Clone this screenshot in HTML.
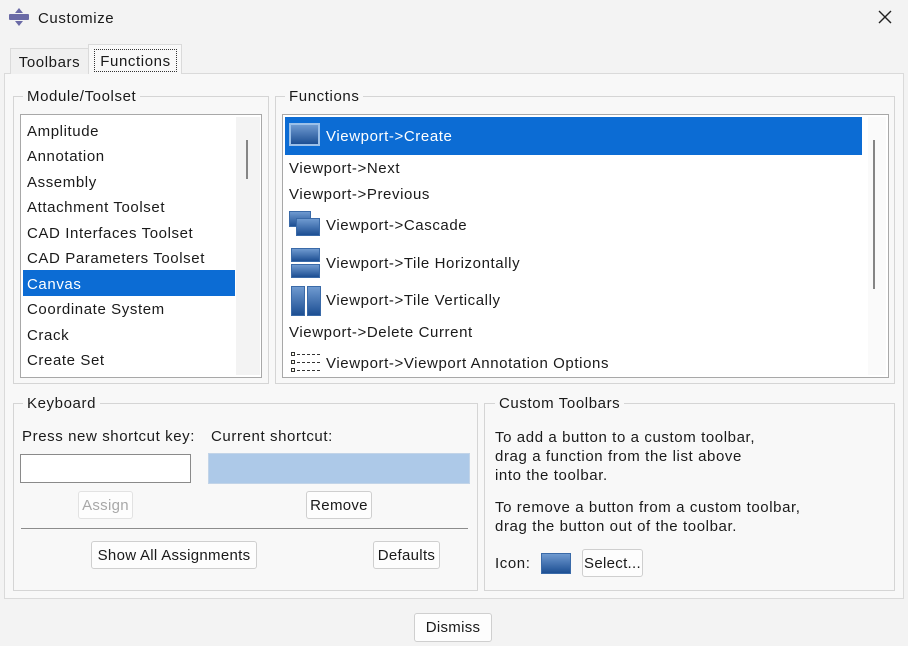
<!DOCTYPE html>
<html><head><style>
*{box-sizing:border-box;margin:0;padding:0}
body{width:908px;height:646px;background:#f3f3f3;font-family:"Liberation Sans",sans-serif;font-size:15px;letter-spacing:0.6px;color:#1a1a1a;position:relative;overflow:hidden}
.a{position:absolute;white-space:nowrap}
.grp{position:absolute;border:1px solid #d5d5d5}
.gl{position:absolute;background:#f8f8f8;padding:0 4px;line-height:16px}
.btn{position:absolute;background:#fdfdfd;border:1px solid #cfcfcf;border-radius:3px;text-align:center;line-height:27px;letter-spacing:0.3px}
.li{position:absolute;left:6px;line-height:18px}
.ic{position:absolute;background:linear-gradient(#6f9ad0,#1d4f93);border:1px solid #3a6aa8}
</style></head><body>
<svg class="a" style="left:9px;top:8px" width="20" height="18" viewBox="0 0 20 18"><path d="M10 0 L14 5 H6 Z" fill="#6a6aa6"/><rect x="0" y="6" width="20" height="6" rx="1" fill="#6a6aa6"/><path d="M10 18 L14 13 H6 Z" fill="#6a6aa6"/></svg>
<div class="a" style="left:38px;top:10px;font-size:15px">Customize</div>
<svg class="a" style="left:878px;top:10px" width="14" height="14"><path d="M1 1 L13 13 M13 1 L1 13" stroke="#222" stroke-width="1.4"/></svg>

<div class="a" style="left:4px;top:73px;width:900px;height:526px;background:#f8f8f8;border:1px solid #dadada"></div>
<div class="a" style="left:10px;top:48px;width:79px;height:26px;background:#f0f0f0;border:1px solid #dadada;border-bottom:none;text-align:center;line-height:28px">Toolbars</div>
<div class="a" style="left:88px;top:44px;width:94px;height:30px;background:#f8f8f8;border:1px solid #dadada;border-bottom:none"></div>
<div class="a" style="left:94px;top:49px;width:83px;height:23px;border:1px dotted #333;text-align:center;line-height:23px">Functions</div>

<div class="grp" style="left:13px;top:96px;width:256px;height:288px"></div>
<div class="gl" style="left:23px;top:89px">Module/Toolset</div>
<div class="a" style="left:20px;top:114px;width:242px;height:264px;background:#fff;border:1px solid #a8a8a8">
 <div class="a" style="left:215px;top:2px;width:24px;height:258px;background:#f3f3f3"></div>
 <div class="a" style="left:225px;top:25px;width:2px;height:39px;background:#858585"></div>
 <div class="a" style="left:2px;top:155px;width:212px;height:26px;background:#0c6cd4"></div>
 <div class="li" style="top:8px">Amplitude</div>
 <div class="li" style="top:33px">Annotation</div>
 <div class="li" style="top:59px">Assembly</div>
 <div class="li" style="top:84px">Attachment Toolset</div>
 <div class="li" style="top:110px">CAD Interfaces Toolset</div>
 <div class="li" style="top:135px">CAD Parameters Toolset</div>
 <div class="li" style="top:161px;color:#fff">Canvas</div>
 <div class="li" style="top:186px">Coordinate System</div>
 <div class="li" style="top:212px">Crack</div>
 <div class="li" style="top:237px">Create Set</div>
</div>

<div class="grp" style="left:275px;top:96px;width:620px;height:288px"></div>
<div class="gl" style="left:285px;top:89px">Functions</div>
<div class="a" style="left:282px;top:114px;width:607px;height:264px;background:#fff;border:1px solid #a8a8a8">
 <div class="a" style="left:585px;top:2px;width:18px;height:258px;background:#fafafa"></div>
 <div class="a" style="left:590px;top:25px;width:2px;height:149px;background:#858585"></div>
 <div class="a" style="left:2px;top:2px;width:577px;height:38px;background:#0c6cd4"></div>
 <div class="ic" style="left:6px;top:8px;width:31px;height:23px;border:2px solid #9cc0e8"></div>
 <div class="li" style="left:43px;top:13px;color:#fff">Viewport-&gt;Create</div>
 <div class="li" style="top:45px">Viewport-&gt;Next</div>
 <div class="li" style="top:71px">Viewport-&gt;Previous</div>
 <div class="ic" style="left:6px;top:96px;width:22px;height:16px"></div>
 <div class="ic" style="left:13px;top:103px;width:24px;height:18px"></div>
 <div class="li" style="left:43px;top:102px">Viewport-&gt;Cascade</div>
 <div class="ic" style="left:8px;top:133px;width:29px;height:14px"></div>
 <div class="ic" style="left:8px;top:149px;width:29px;height:14px"></div>
 <div class="li" style="left:43px;top:140px">Viewport-&gt;Tile Horizontally</div>
 <div class="ic" style="left:8px;top:171px;width:14px;height:30px"></div>
 <div class="ic" style="left:24px;top:171px;width:14px;height:30px"></div>
 <div class="li" style="left:43px;top:177px">Viewport-&gt;Tile Vertically</div>
 <div class="li" style="top:209px">Viewport-&gt;Delete Current</div>
 <svg class="a" style="left:8px;top:236px" width="30" height="24"><g stroke="#333" fill="#ffe" stroke-width="1"><rect x="0.5" y="1.5" width="3" height="3"/><rect x="0.5" y="9.5" width="3" height="3"/><rect x="0.5" y="17.5" width="3" height="3"/></g><g stroke="#333" stroke-dasharray="3,2"><path d="M6 3.5H30M6 11.5H30M6 19.5H30"/></g></svg>
 <div class="li" style="left:43px;top:240px">Viewport-&gt;Viewport Annotation Options</div>
</div>

<div class="grp" style="left:13px;top:403px;width:465px;height:188px"></div>
<div class="gl" style="left:23px;top:396px">Keyboard</div>
<div class="a" style="left:22px;top:428px">Press new shortcut key:</div>
<div class="a" style="left:211px;top:428px">Current shortcut:</div>
<div class="a" style="left:20px;top:454px;width:171px;height:29px;background:#fff;border:1px solid #8a8a8a"></div>
<div class="a" style="left:208px;top:453px;width:262px;height:31px;background:#adc9e8;border:1px solid #c2d4e8"></div>
<div class="btn" style="left:78px;top:491px;width:55px;height:28px;color:#a8a8a8;border-color:#e2e2e2">Assign</div>
<div class="btn" style="left:306px;top:491px;width:66px;height:28px">Remove</div>
<div class="a" style="left:21px;top:528px;width:447px;height:1px;background:#8c8c8c"></div>
<div class="btn" style="left:91px;top:541px;width:166px;height:28px">Show All Assignments</div>
<div class="btn" style="left:373px;top:541px;width:67px;height:28px">Defaults</div>

<div class="grp" style="left:484px;top:403px;width:411px;height:188px"></div>
<div class="gl" style="left:495px;top:396px">Custom Toolbars</div>
<div class="a" style="left:495px;top:428px;line-height:19px">To add a button to a custom toolbar,<br>drag a function from the list above<br>into the toolbar.</div>
<div class="a" style="left:495px;top:498px;line-height:19px">To remove a button from a custom toolbar,<br>drag the button out of the toolbar.</div>
<div class="a" style="left:495px;top:555px">Icon:</div>
<div class="ic" style="left:541px;top:553px;width:30px;height:21px"></div>
<div class="btn" style="left:582px;top:549px;width:61px;height:28px">Select...</div>

<div class="btn" style="left:414px;top:613px;width:78px;height:29px">Dismiss</div>
</body></html>
